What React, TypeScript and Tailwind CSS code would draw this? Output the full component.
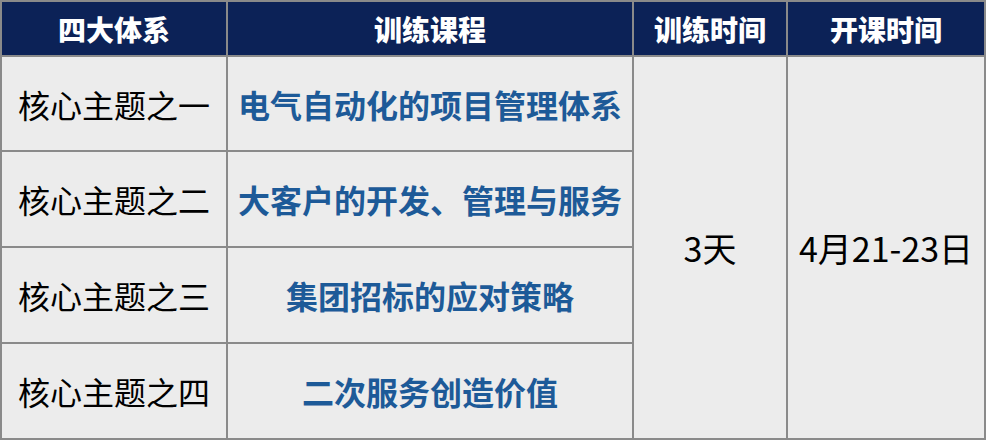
import { Fragment } from "react";

const topics = [
  { name: "核心主题之一", course: "电气自动化的项目管理体系" },
  { name: "核心主题之二", course: "大客户的开发、管理与服务" },
  { name: "核心主题之三", course: "集团招标的应对策略" },
  { name: "核心主题之四", course: "二次服务创造价值" },
];

const font = { fontFamily: '"Noto Sans CJK SC", "Noto Sans", sans-serif' };

const App = () => {
  return (
    <div className="w-[986px] h-[440px] bg-[#8a8a8a] p-[2px]" style={font}>
      <div className="grid h-full grid-cols-[224px_404px_152px_196px] grid-rows-[53px_93px_94px_94px_94px] gap-[2px]">
        {["四大体系", "训练课程", "训练时间", "开课时间"].map((h) => (
          <div
            key={h}
            className="flex items-center justify-center bg-[#0c2257] text-[28px] font-black text-white"
          >
            {h}
          </div>
        ))}

        {topics.map((t, i) => (
          <Fragment key={t.name}>
            <div
              className="flex items-center justify-center bg-[#ececec] text-[32px] text-black"
              style={{ gridColumn: 1, gridRow: i + 2 }}
            >
              {t.name}
            </div>
            <div
              className="flex items-center justify-center bg-[#ececec] text-[32px] font-bold text-[#1d5a98]"
              style={{ gridColumn: 2, gridRow: i + 2 }}
            >
              {t.course}
            </div>
          </Fragment>
        ))}

        <div className="col-start-3 row-start-2 row-span-4 flex items-center justify-center bg-[#ececec] text-[34px] text-black">
          3天
        </div>
        <div className="col-start-4 row-start-2 row-span-4 flex items-center justify-center bg-[#ececec] text-[34px] text-black">
          4月21-23日
        </div>
      </div>
    </div>
  );
};

export default App;
